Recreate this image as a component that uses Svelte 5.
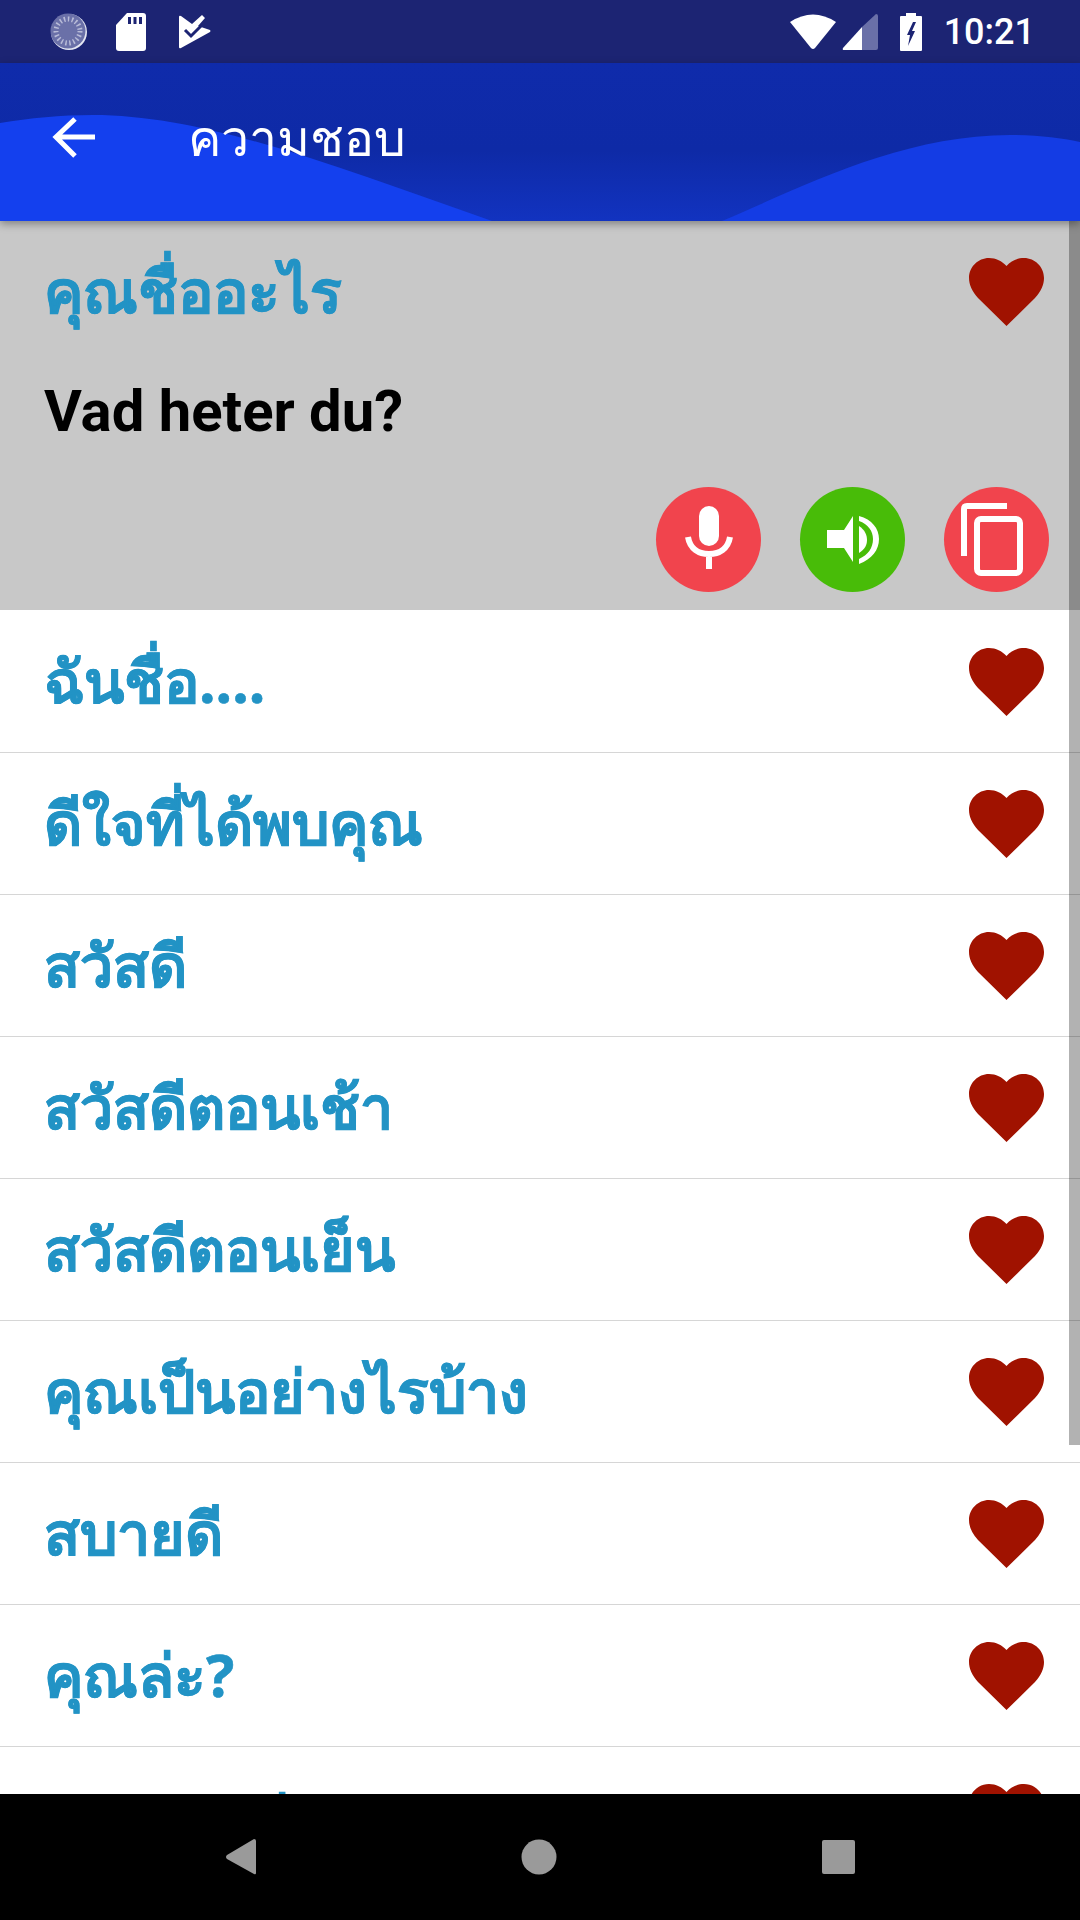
<script>
  const rows = [
    'ฉันชื่อ....',
    'ดีใจที่ได้พบคุณ',
    'สวัสดี',
    'สวัสดีตอนเช้า',
    'สวัสดีตอนเย็น',
    'คุณเป็นอย่างไรบ้าง',
    'สบายดี',
    'คุณล่ะ?',
    'ขอบคุณค่ะ',
  ];
</script>

{#snippet heart()}
  <svg class="heart" viewBox="0 0 75 68" aria-hidden="true">
    <path d="M37.5 68 L9 40 C3 33 0 27 0 20 C0 9 9 0 20 0 C27 0 33 3 37.5 8 C42 3 48 0 55 0 C66 0 75 9 75 20 C75 27 72 33 66 40 Z" />
  </svg>
{/snippet}

<div class="screen">
  <div class="status">
    <div class="status-left">
      <svg width="38" height="38" viewBox="0 0 38 38" aria-hidden="true">
        <circle cx="19" cy="19" r="18" fill="#e4e6f2" />
        <circle cx="18" cy="18" r="17.5" fill="#6a70a8" />
        <circle cx="18" cy="18" r="12" fill="none" stroke="#b9bcd8" stroke-width="5" stroke-dasharray="1.5 2.5" />
      </svg>
      <svg class="sd" width="30" height="38" viewBox="0 0 30 38" aria-hidden="true">
        <path fill="#fff" d="M11 0 H27 Q30 0 30 3 V35 Q30 38 27 38 H3 Q0 38 0 35 V12 Z" />
        <path fill="#1c2473" d="M12 4 h3 v7 h-3z M17.5 4 h3 v7 h-3z M23 4 h3 v7 h-3z" />
      </svg>
      <svg class="check" width="32" height="34" viewBox="0 0 32 34" aria-hidden="true">
        <path fill="#fff" d="M0 2 Q0 0 2 1 L13 9 L23 0 L26 3 L19 11 L31 15 Q32 16 31 17 L2 33 Q0 34 0 32 Z" />
        <path fill="none" stroke="#1c2473" stroke-width="3" d="M6 15 L12 21 L22 11" />
      </svg>
    </div>
    <div class="status-right">
      <svg width="46" height="36" viewBox="0 0 46 36" aria-hidden="true">
        <path fill="#fff" d="M0 8 Q23 -7 46 8 L25 34 Q23 36 21 34 Z" />
      </svg>
      <svg class="signal" width="36" height="36" viewBox="0 0 36 36" aria-hidden="true">
        <path fill="#6a70a8" d="M34 0 Q36 0 36 2 V34 Q36 36 34 36 H20 V13 Z" />
        <path fill="#fff" d="M20 13 V36 H2 Q0 36 1 34 Z" />
      </svg>
      <svg class="battery" width="22" height="38" viewBox="0 0 22 38" aria-hidden="true">
        <path fill="#fff" d="M6 0 H16 V3 H21 Q22 3 22 4 V37 Q22 38 21 38 H1 Q0 38 0 37 V4 Q0 3 1 3 H6 Z" />
        <path fill="#1c2473" d="M13 9 L7 22 H10 L8 33 L15 18 H12 L16 9 Z" />
      </svg>
      <span class="time">10:21</span>
    </div>
  </div>

  <header class="appbar">
    <svg class="wave" viewBox="0 0 1080 158" preserveAspectRatio="none" aria-hidden="true">
      <path fill="#1440ee" d="M0 60 C30 55 60 52 93 52 C207 52 340 105 492 158 L0 158 Z" />
      <path fill="#143ce4" d="M722 158 C800 125 900 72 1010 72 C1040 72 1060 75 1080 79 L1080 158 Z" />
    </svg>
    <svg class="back" width="44" height="44" viewBox="0 0 44 44" aria-hidden="true">
      <path fill="none" stroke="#fff" stroke-width="5" d="M43 20 H6 M23 2 L4 20 L23 39" />
    </svg>
    <h1>ความชอบ</h1>
  </header>

  <main class="content">
    <section class="selected">
      <div class="selected-top">
        <span class="thai">คุณชื่ออะไร</span>
        {@render heart()}
      </div>
      <div class="translation">Vad heter du?</div>
      <div class="actions">
        <button class="round red" aria-label="Mic">
          <svg class="mic" width="48" height="64" viewBox="0 0 48 64" aria-hidden="true">
            <rect x="14" y="0" width="20" height="40" rx="10" fill="#fff" />
            <path fill="none" stroke="#fff" stroke-width="6" d="M3 31 C5 43 14 48 24 48 C34 48 43 43 45 31 M24 48 V63" />
          </svg>
        </button>
        <button class="round green" aria-label="Speak">
          <svg width="52" height="48" viewBox="0 0 52 48" aria-hidden="true">
            <path fill="#fff" d="M0 14 H17 L26 0 V46 L17 32 H0 Z" />
            <path fill="#fff" d="M32 10 C38 14 40 19 40 24 C40 29 38 33 32 37 Z" />
            <path fill="#fff" d="M32 0 C45 3 52 13 52 23 C52 34 45 43 32 48 V43 C41 39 46 32 46 23 C46 15 41 8 32 5 Z" />
          </svg>
        </button>
        <button class="round red" aria-label="Copy">
          <svg class="copy" width="62" height="73" viewBox="0 0 62 73" aria-hidden="true">
            <path fill="none" stroke="#fff" stroke-width="6" d="M3 53 V6 Q3 3 6 3 H46" />
            <rect x="16" y="16" width="43" height="54" rx="4" fill="none" stroke="#fff" stroke-width="6" />
          </svg>
        </button>
      </div>
    </section>

    <div class="list">
      {#each rows as row}
        <div class="row">
          <span class="thai">{row}</span>
          {@render heart()}
        </div>
      {/each}
    </div>

    <div class="scrollbar"></div>
  </main>

  <nav class="navbar">
    <svg width="30" height="36" viewBox="0 0 30 36" aria-hidden="true">
      <path fill="#9a9a9a" d="M28 0 Q30 0 30 2 V34 Q30 36 28 35 L1 20 Q-1 18 1 16 Z" />
    </svg>
    <svg width="36" height="36" viewBox="0 0 36 36" aria-hidden="true">
      <circle cx="18" cy="18" r="17.5" fill="#9a9a9a" />
    </svg>
    <svg width="33" height="36" viewBox="0 0 33 36" aria-hidden="true">
      <rect width="33" height="34" y="1" rx="2" fill="#9a9a9a" />
    </svg>
  </nav>
</div>

<style>
  :global(body) {
    margin: 0;
    background: #fff;
  }
  .screen {
    width: 1080px;
    height: 1920px;
    display: flex;
    flex-direction: column;
    overflow: hidden;
    font-family: "Noto Sans", Roboto, sans-serif;
  }
  .status {
    height: 63px;
    flex: none;
    background: #1c2473;
    display: flex;
    align-items: center;
    justify-content: space-between;
    padding: 0 45px 0 50px;
  }
  .status-left,
  .status-right {
    display: flex;
    align-items: center;
  }
  .sd {
    margin-left: 28px;
  }
  .check {
    margin-left: 33px;
  }
  .signal {
    margin-left: 6px;
  }
  .battery {
    margin-left: 22px;
  }
  .time {
    margin-left: 22px;
    color: #fff;
    font: 500 36px Roboto, sans-serif;
  }
  .appbar {
    position: relative;
    height: 158px;
    flex: none;
    background: linear-gradient(#0f2bab, #0e2aa6 55%, #1233c0);
    display: flex;
    align-items: center;
    padding-left: 52px;
    box-shadow: 0 3px 8px rgba(0, 0, 0, 0.35);
    z-index: 2;
  }
  .wave {
    position: absolute;
    inset: 0;
    width: 100%;
    height: 100%;
  }
  .back {
    position: relative;
    margin-top: -6px;
  }
  h1 {
    position: relative;
    margin: 0 0 8px 92px;
    color: #fff;
    font-size: 50px;
    font-weight: 400;
  }
  .content {
    position: relative;
    flex: 1;
    min-height: 0;
    overflow: hidden;
  }
  .selected {
    height: 389px;
    box-sizing: border-box;
    background: #c8c8c8;
    padding: 0 31px 18px 44px;
    display: flex;
    flex-direction: column;
  }
  .selected-top {
    height: 141px;
    display: flex;
    align-items: center;
    justify-content: space-between;
    padding-right: 5px;
  }
  .thai {
    color: #2293c5;
    font-size: 59px;
    font-weight: 700;
    -webkit-text-stroke: 0.6px #2293c5;
    white-space: nowrap;
  }
  .translation {
    font: 700 58px Roboto, sans-serif;
    color: #000;
    margin-top: 15px;
  }
  .actions {
    display: flex;
    justify-content: flex-end;
    gap: 39px;
    margin-top: auto;
  }
  .round {
    width: 105px;
    height: 105px;
    border: none;
    border-radius: 50%;
    padding: 0;
    display: flex;
    align-items: center;
    justify-content: center;
  }
  .red {
    background: #f1444d;
  }
  .green {
    background: #48bc08;
  }
  .mic {
    margin-bottom: 4px;
  }
  .copy {
    margin-right: 9px;
  }
  .list {
    padding-top: 1px;
  }
  .row {
    height: 142px;
    box-sizing: border-box;
    border-bottom: 1px solid #d6d6d6;
    display: flex;
    align-items: center;
    justify-content: space-between;
    padding: 0 36px 0 44px;
  }
  .heart {
    width: 75px;
    height: 68px;
    fill: #a01200;
    flex: none;
  }
  .scrollbar {
    position: absolute;
    top: 0;
    right: 0;
    width: 11px;
    height: 1224px;
    background: rgba(0, 0, 0, 0.3);
  }
  .navbar {
    height: 126px;
    flex: none;
    background: #000;
    display: flex;
    align-items: center;
    gap: 265px;
    padding-left: 226px;
    position: relative;
    z-index: 2;
  }
</style>
